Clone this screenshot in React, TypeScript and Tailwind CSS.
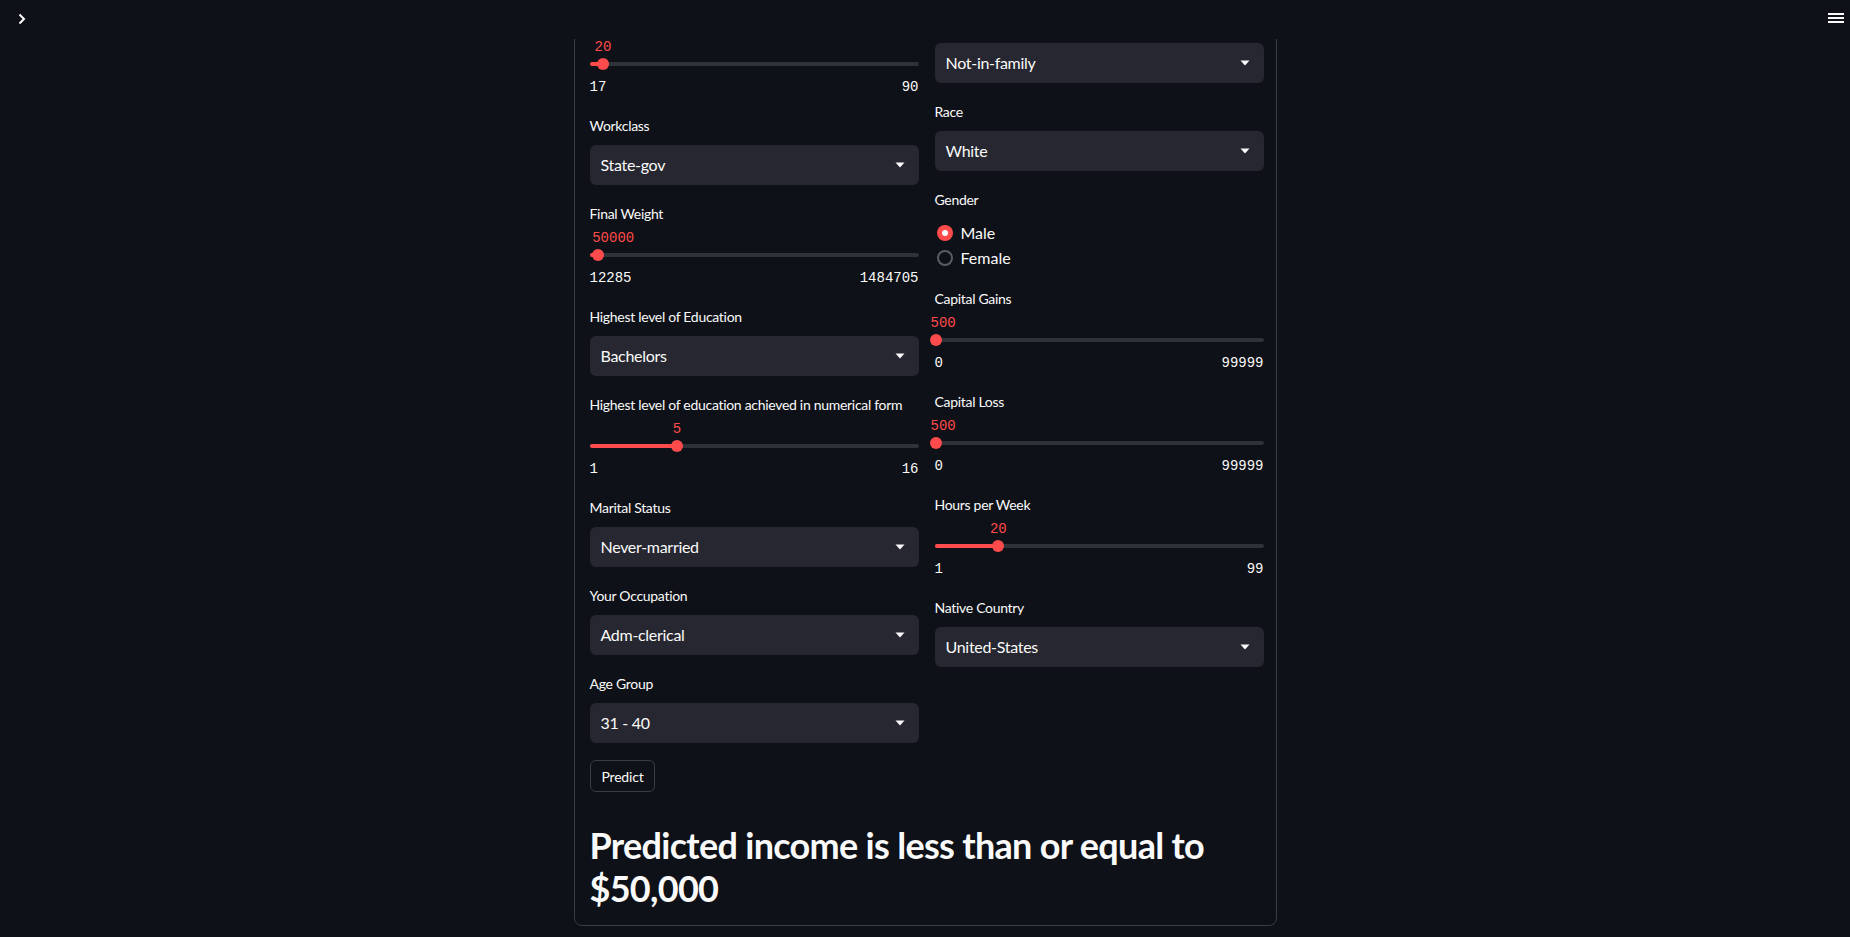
import React from "react";

const sans = "font-[Lato,'Noto_Sans',sans-serif]";
const mono = "font-['Liberation_Mono','DejaVu_Sans_Mono',monospace]";

function FieldLabel({ children }: { children?: React.ReactNode }) {
  return (
    <div className={`h-[24px] flex items-center text-[14px] tracking-[-0.3px] text-[#fafafa] ${sans}`}>{children}</div>
  );
}

function Caret() {
  return (
    <svg width="10" height="6" viewBox="0 0 10 6" className="shrink-0">
      <path d="M0.5 0.5 L9.5 0.5 L5 5.5 Z" fill="#fafafa" />
    </svg>
  );
}

function Select({ label, value }: { label?: string; value: string }) {
  return (
    <div className="flex flex-col">
      <FieldLabel>{label}</FieldLabel>
      <div className="mt-[8px] h-[40px] rounded-[6px] bg-[#262730] flex items-center justify-between pl-[11px] pr-[14px]">
        <span className={`text-[16px] tracking-[-0.3px] text-[#fafafa] ${sans}`}>{value}</span>
        <Caret />
      </div>
    </div>
  );
}

type SliderProps = {
  label?: string;
  value: string;
  min: string;
  max: string;
  pos: number;
  valueLeft?: number;
};

function Slider({ label, value, min, max, pos, valueLeft }: SliderProps) {
  const valueStyle =
    valueLeft === undefined
      ? { left: pos, transform: "translateX(-50%)" }
      : { left: valueLeft };
  return (
    <div className="flex flex-col">
      <FieldLabel>{label}</FieldLabel>
      <div className="relative mt-[3px] h-[21px]">
        <span
          className={`absolute top-0 text-[14px] leading-[21px] text-[#ff4b4b] ${mono}`}
          style={valueStyle}
        >
          {value}
        </span>
      </div>
      <div className="relative h-[12px]">
        <div className="absolute left-0 right-0 top-[4px] h-[4px] rounded-full bg-[#30323a]" />
        <div className="absolute left-0 top-[4px] h-[4px] rounded-full bg-[#ff4b4b]" style={{ width: pos }} />
        <div className="absolute top-0 h-[12px] w-[12px] rounded-full bg-[#ff4b4b]" style={{ left: pos - 6 }} />
      </div>
      <div className={`mt-[7px] h-[20px] flex justify-between text-[14px] leading-[20px] text-[#fafafa] ${mono}`}>
        <span>{min}</span>
        <span>{max}</span>
      </div>
    </div>
  );
}

function Radio({ label, checked }: { label: string; checked?: boolean }) {
  return (
    <div className="h-[25px] flex items-center gap-[8px] pl-[2px]">
      {checked ? (
        <div className="h-[16px] w-[16px] rounded-full bg-[#ff4b4b] flex items-center justify-center">
          <div className="h-[6px] w-[6px] rounded-full bg-[#fafafa]" />
        </div>
      ) : (
        <div className="h-[16px] w-[16px] rounded-full border-2 border-[#5a5c64]" />
      )}
      <span className={`text-[16px] text-[#fafafa] ${sans}`}>{label}</span>
    </div>
  );
}

export default function App() {
  return (
    <div className={`h-[937px] w-full overflow-hidden bg-[#0e1117] flex flex-col ${sans}`}>
      <header className="h-[39px] shrink-0 flex items-start justify-between">
        <svg width="10" height="12" viewBox="0 0 10 12" className="ml-[17px] mt-[13px]">
          <path d="M2.5 1.5 L7 6 L2.5 10.5" stroke="#fafafa" strokeWidth="2" fill="none" />
        </svg>
        <svg width="18" height="14" viewBox="0 0 18 14" className="mr-[5px] mt-[11px]">
          <rect x="1" y="2" width="16" height="2" fill="#fafafa" />
          <rect x="1" y="6" width="16" height="2" fill="#fafafa" />
          <rect x="1" y="10" width="16" height="2" fill="#fafafa" />
        </svg>
      </header>

      <main className="flex-1 overflow-hidden">
        <div className="mx-auto -mt-[45px] w-[703px] rounded-[8px] border border-[#3b3d44] pl-[15px] pr-[12px] pt-[15px] pb-[15px]">
          <div className="grid grid-cols-[329px_329px] gap-x-[16px]">
            <div className="flex flex-col gap-[16px]">
              <Slider value="20" min="17" max="90" pos={13.5} />
              <Select label="Workclass" value="State-gov" />
              <Slider label="Final Weight" value="50000" min="12285" max="1484705" pos={8.7} valueLeft={2.7} />
              <Select label="Highest level of Education" value="Bachelors" />
              <Slider
                label="Highest level of education achieved in numerical form"
                value="5"
                min="1"
                max="16"
                pos={87.5}
              />
              <Select label="Marital Status" value="Never-married" />
              <Select label="Your Occupation" value="Adm-clerical" />
              <Select label="Age Group" value="31 - 40" />
              <div>
                <button className="mt-[1px] h-[32px] rounded-[6px] border border-[#3b3d44] px-[11px] text-[14px] tracking-[-0.2px] text-[#fafafa]">
                  Predict
                </button>
              </div>
            </div>

            <div className="mt-[1px] flex flex-col gap-[16px]">
              <Select value="Not-in-family" />
              <Select label="Race" value="White" />
              <div className="flex flex-col">
                <FieldLabel>Gender</FieldLabel>
                <div className="mt-[9px] flex flex-col">
                  <Radio label="Male" checked />
                  <Radio label="Female" />
                </div>
              </div>
              <Slider label="Capital Gains" value="500" min="0" max="99999" pos={1.7} valueLeft={-4} />
              <Slider label="Capital Loss" value="500" min="0" max="99999" pos={1.7} valueLeft={-4} />
              <Slider label="Hours per Week" value="20" min="1" max="99" pos={63.8} />
              <Select label="Native Country" value="United-States" />
            </div>
          </div>

          <h2 className="mt-[32px] text-[36px] leading-[43px] font-bold text-[#fafafa] tracking-[-0.7px]">
            Predicted income is less than or equal to $50,000
          </h2>
        </div>
      </main>
    </div>
  );
}
